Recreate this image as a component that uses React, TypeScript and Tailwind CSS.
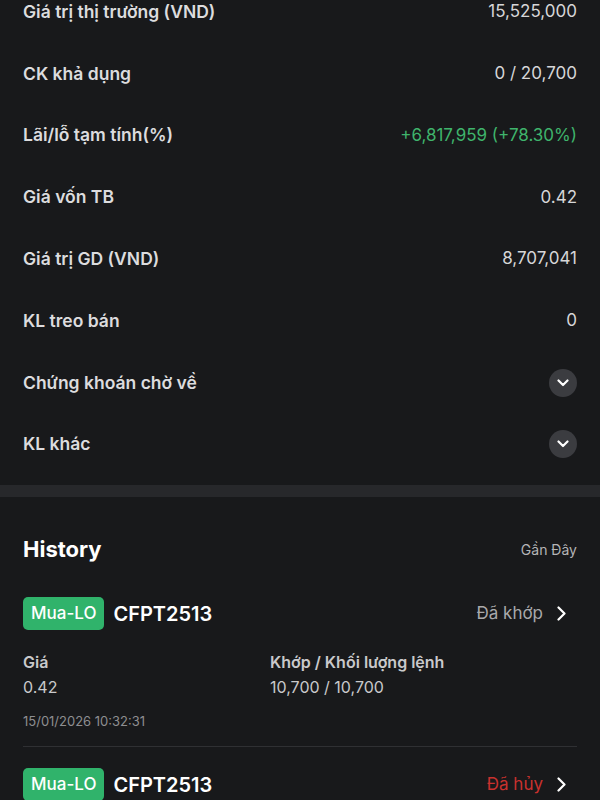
import React from "react";

interface InfoRow {
  label: string;
  value?: string;
  tone?: "green";
  expandable?: boolean;
}

interface Order {
  side: string;
  symbol: string;
  status: string;
  statusTone: "gray" | "red";
  price: string;
  matched: string;
  time: string;
}

const rows: InfoRow[] = [
  { label: "Giá trị thị trường (VND)", value: "15,525,000" },
  { label: "CK khả dụng", value: "0 / 20,700" },
  { label: "Lãi/lỗ tạm tính(%)", value: "+6,817,959 (+78.30%)", tone: "green" },
  { label: "Giá vốn TB", value: "0.42" },
  { label: "Giá trị GD (VND)", value: "8,707,041" },
  { label: "KL treo bán", value: "0" },
  { label: "Chứng khoán chờ về", expandable: true },
  { label: "KL khác", expandable: true },
];

const orders: Order[] = [
  {
    side: "Mua-LO",
    symbol: "CFPT2513",
    status: "Đã khớp",
    statusTone: "gray",
    price: "0.42",
    matched: "10,700 / 10,700",
    time: "15/01/2026 10:32:31",
  },
  {
    side: "Mua-LO",
    symbol: "CFPT2513",
    status: "Đã hủy",
    statusTone: "red",
    price: "0.42",
    matched: "0 / 10,700",
    time: "15/01/2026 10:30:02",
  },
];

const ChevronDown = () => (
  <svg width="12" height="8" viewBox="0 0 12 8" fill="none">
    <path d="M1.5 1.5L6 6L10.5 1.5" stroke="#ffffff" strokeWidth="2.2" strokeLinecap="round" strokeLinejoin="round" />
  </svg>
);

const ChevronRight = () => (
  <svg width="9" height="15" viewBox="0 0 9 15" fill="none">
    <path d="M1.5 1.5L7.5 7.5L1.5 13.5" stroke="#ffffff" strokeWidth="2.2" strokeLinecap="round" strokeLinejoin="round" />
  </svg>
);

const OrderCard = ({ order, last }: { order: Order; last: boolean }) => (
  <div className={last ? "pt-[21px]" : "pt-0 pb-[15px] border-b border-[#2f3033]"}>
    <div className="flex items-center justify-between">
      <div className="flex items-center gap-[9px]">
        <span className="h-[33px] px-[8px] flex items-center rounded-[5px] bg-[#30b36b] text-white text-[17px] font-medium">
          {order.side}
        </span>
        <span className="text-white text-[20px] font-semibold">{order.symbol}</span>
      </div>
      <div className="flex items-center gap-[14px] pr-[11px]">
        <span
          className={
            order.statusTone === "red"
              ? "text-[17px] text-[#c8312e]"
              : "text-[17px] text-[#a9a9ab]"
          }
        >
          {order.status}
        </span>
        <ChevronRight />
      </div>
    </div>
    {!last && (
      <>
        <div className="grid grid-cols-[247px_1fr] mt-[20px]">
          <div>
            <div className="text-[16px] leading-[25px] font-semibold text-[#c9c9cb]">Giá</div>
            <div className="text-[16px] leading-[25px] text-[#c9c9cb]">{order.price}</div>
          </div>
          <div>
            <div className="text-[16px] leading-[25px] font-semibold text-[#c9c9cb]">Khớp / Khối lượng lệnh</div>
            <div className="text-[16px] leading-[25px] text-[#c9c9cb]">{order.matched}</div>
          </div>
        </div>
        <div className="mt-[11px] text-[13px] leading-[20px] text-[#8e8e91]">{order.time}</div>
      </>
    )}
  </div>
);

const App = () => {
  return (
    <div className="w-[600px] h-[800px] overflow-hidden bg-[#18191b] font-['Inter','Liberation_Sans',sans-serif]">
      <div className="-mt-[19px] px-[23px] pb-[10px]">
        {rows.map((row, index) => (
          <div key={index} className="h-[61.8px] flex items-center justify-between">
            <span className="text-[17.5px] font-semibold text-[#dcdcde]">{row.label}</span>
            {row.expandable ? (
              <span className="w-[28px] h-[28px] rounded-full bg-[#3b3c40] flex items-center justify-center">
                <ChevronDown />
              </span>
            ) : (
              <span
                className={
                  row.tone === "green"
                    ? "text-[17px] text-[#3fb46c]"
                    : "text-[17px] text-[#d6d6d8]"
                }
              >
                {row.value}
              </span>
            )}
          </div>
        ))}
      </div>

      <div className="h-[12px] bg-[#27282b]" />

      <div className="px-[23px] pt-[38px]">
        <div className="flex items-center justify-between">
          <h2 className="text-[22px] leading-[28px] font-bold text-white">History</h2>
          <span className="text-[14px] text-[#b4b4b6]">Gần Đây</span>
        </div>
        <div className="mt-[34px]">
          {orders.map((order, index) => (
            <OrderCard key={index} order={order} last={index === orders.length - 1} />
          ))}
        </div>
      </div>
    </div>
  );
};

export default App;
